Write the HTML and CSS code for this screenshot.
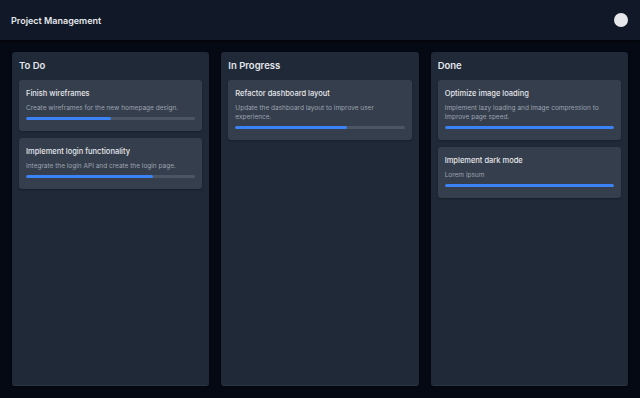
FILE: index.html
```html
<!DOCTYPE html>
<html lang="en">
<head>
  <meta charset="UTF-8" />
  <meta name="viewport" content="width=device-width, initial-scale=1.0" />
  <title>Project Management</title>
  <link rel="stylesheet" href="styles.css">
</head>
<body>
  <!-- Top bar -->
  <header class="topbar">
    <h1>Project Management</h1>
    <div class="avatar"></div>
  </header>

  <!-- Board -->
  <main class="board">
    <section class="column">
      <h2>To Do</h2>
      <div class="card">
        <h3>Finish wireframes</h3>
        <p>Create wireframes for the new homepage design.</p>
        <div class="track"><div class="fill" style="width:50%"></div></div>
      </div>
      <div class="card">
        <h3>Implement login functionality</h3>
        <p>Integrate the login API and create the login page.</p>
        <div class="track"><div class="fill" style="width:75%"></div></div>
      </div>
    </section>

    <section class="column">
      <h2>In Progress</h2>
      <div class="card">
        <h3>Refactor dashboard layout</h3>
        <p>Update the dashboard layout to improve user experience.</p>
        <div class="track"><div class="fill" style="width:66%"></div></div>
      </div>
    </section>

    <section class="column">
      <h2>Done</h2>
      <div class="card">
        <h3>Optimize image loading</h3>
        <p>Implement lazy loading and image compression to improve page speed.</p>
        <div class="track"><div class="fill" style="width:100%"></div></div>
      </div>
      <div class="card">
        <h3>Implement dark mode</h3>
        <p>Lorem ipsum</p>
        <div class="track"><div class="fill" style="width:100%"></div></div>
      </div>
    </section>
  </main>
</body>
</html>
```

FILE: styles.css
```css
* { box-sizing: border-box; }
html, body { height: 100%; }
body { margin: 0; font-family: Inter, "Noto Sans", sans-serif; background: #050913; color: #e5e7eb; display: flex; flex-direction: column; }

.topbar { height: 40px; flex: none; display: flex; align-items: center; justify-content: space-between; padding: 0 12px 0 11px; background: #111827; box-shadow: 0 1px 3px rgba(0,0,0,0.6); }
.topbar h1 { margin: 0; font-size: 9px; font-weight: 600; color: #e5e7eb; }
.avatar { width: 14px; height: 14px; border-radius: 50%; background: #e5e7eb; }

.board { flex: 1; display: grid; grid-template-columns: repeat(3, 1fr); gap: 12px; padding: 12px; min-height: 0; }
.column { background: #1f2937; border-radius: 3px; padding: 8px 7px; box-shadow: 0 1px 2px rgba(0,0,0,0.5); border-bottom: 1px solid #2c3544; }
.column h2 { margin: 0 0 8px; font-size: 9.5px; line-height: 12px; font-weight: 600; color: #e5e7eb; }

.card { background: #353e4c; border-radius: 3px; padding: 9px 7px 11px; margin-bottom: 7px; box-shadow: 0 1px 2px rgba(0,0,0,0.25); }
.card h3 { margin: 0 0 5px; font-size: 7.5px; line-height: 10px; font-weight: 500; color: #e5e7eb; }
.card p { margin: 0 0 4px; font-size: 6.5px; line-height: 9px; color: #9ca3af; }
.track { height: 3px; background: #4b5563; border-radius: 2px; overflow: hidden; }
.fill { height: 100%; background: #3b82f6; border-radius: 2px; }
```
